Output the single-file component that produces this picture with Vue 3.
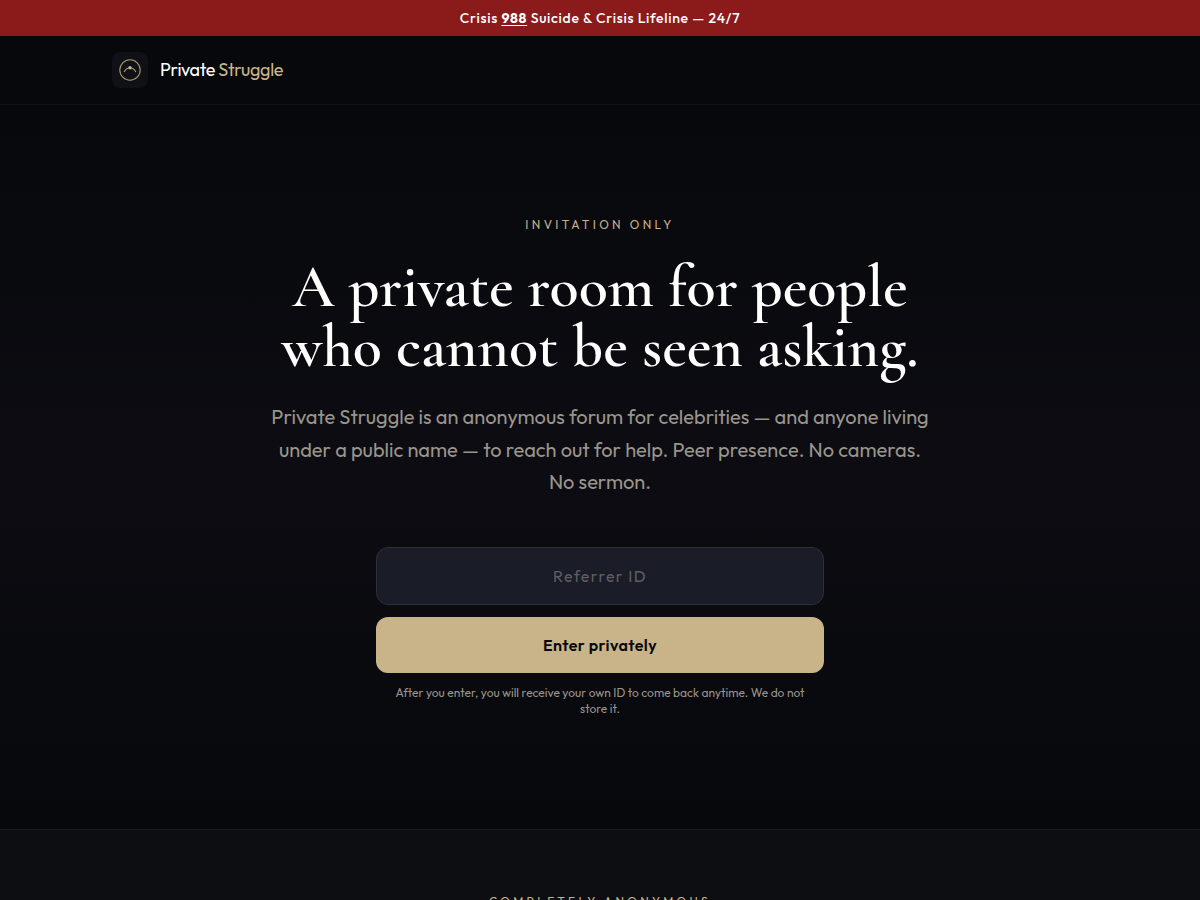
<script setup>
import { ref } from 'vue'

const referrer = ref('')
</script>

<template>
  <div class="page">
    <aside class="crisis">
      <p>Crisis <a href="tel:988">988</a> Suicide &amp; Crisis Lifeline — 24/7</p>
    </aside>

    <header class="header">
      <a class="brand" href="#">
        <span class="mark">
          <svg viewBox="0 0 24 24" width="24" height="24" fill="none" aria-hidden="true">
            <circle cx="12" cy="12" r="10.2" stroke="#a8976f" stroke-width="1.1" />
            <path d="M6.3 13.6C8 10.8 9.8 9.7 12 9.7s4 1.1 5.7 3.9" stroke="#a8976f" stroke-width="1.1" stroke-linecap="round" />
            <circle cx="12" cy="9.8" r="1.7" fill="#c9b48a" />
          </svg>
        </span>
        <span class="name">Private <span class="gold">Struggle</span></span>
      </a>
    </header>

    <main>
      <section class="hero">
        <p class="eyebrow">Invitation only</p>
        <h1>A private room for people who cannot be seen asking.</h1>
        <p class="lead">
          Private Struggle is an anonymous forum for celebrities — and anyone living
          under a public name — to reach out for help. Peer presence. No cameras.
          No&nbsp;sermon.
        </p>
        <form class="entry" @submit.prevent>
          <input v-model="referrer" type="text" placeholder="Referrer ID" aria-label="Referrer ID" />
          <button type="submit">Enter privately</button>
          <p class="note">
            After you enter, you will receive your own ID to come back anytime. We do not store&nbsp;it.
          </p>
        </form>
      </section>

      <section class="anonymous">
        <p class="eyebrow">Completely anonymous</p>
      </section>
    </main>
  </div>
</template>

<style>
body {
  background: #07080c;
}
</style>

<style scoped>
.page {
  height: 100vh;
  overflow: hidden;
  background: #07080c;
  color: #fff;
  font-family: Outfit, Lato, "Liberation Sans", sans-serif;
  font-size: 16px;
}
p,
h1 {
  margin: 0;
}
.crisis {
  padding: 8px 16px;
  background: #8b1a1a;
  text-align: center;
  font-size: 14px;
  font-weight: 500;
  line-height: 20px;
  letter-spacing: 0.05em;
}
.crisis a {
  color: inherit;
  font-weight: 700;
  text-decoration: underline;
  text-underline-offset: 2px;
}
.header {
  padding: 16px 24px;
  border-bottom: 1px solid #121317;
}
.brand {
  display: flex;
  align-items: center;
  gap: 12px;
  max-width: 976px;
  margin: 0 auto;
  color: #fff;
  text-decoration: none;
}
.mark {
  display: flex;
  align-items: center;
  justify-content: center;
  width: 36px;
  height: 36px;
  border-radius: 8px;
  background: #0f1116;
}
.name {
  font-size: 18px;
  line-height: 28px;
  letter-spacing: -0.02em;
}
.gold {
  color: #c9b48a;
}
.hero {
  padding: 112px 24px;
  background: linear-gradient(#07080c, #0c0c12 50%, #07080c);
  text-align: center;
}
.eyebrow {
  color: #c9b48a;
  font-size: 12px;
  line-height: 16px;
  letter-spacing: 0.28em;
  text-transform: uppercase;
}
h1 {
  max-width: 672px;
  margin: 24px auto 0;
  font-family: "Cormorant Garamond", "Liberation Serif", serif;
  font-size: 60px;
  font-weight: 600;
  line-height: 60px;
}
.lead {
  max-width: 672px;
  margin: 24px auto 0;
  color: #9a958c;
  font-size: 20px;
  line-height: 1.625;
}
.entry {
  display: flex;
  flex-direction: column;
  gap: 12px;
  max-width: 448px;
  margin: 48px auto 0;
}
input,
button {
  box-sizing: border-box;
  width: 100%;
  border-radius: 12px;
  font-family: inherit;
  font-size: 16px;
  line-height: 24px;
  text-align: center;
}
input {
  padding: 16px 20px;
  border: 1px solid #2d2e36;
  background: #1a1c27;
  color: #fff;
  letter-spacing: 0.08em;
}
input::placeholder {
  color: #5f5e60;
  opacity: 1;
}
button {
  padding: 16px 24px;
  border: 0;
  background: #c9b48a;
  color: #07080c;
  font-weight: 600;
  letter-spacing: 0.025em;
}
.note {
  color: #9a958c;
  font-size: 12px;
  line-height: 16px;
}
.anonymous {
  padding: 64px 24px;
  border-top: 1px solid #1a1c20;
  background: #0d0e12;
  text-align: center;
}
</style>
